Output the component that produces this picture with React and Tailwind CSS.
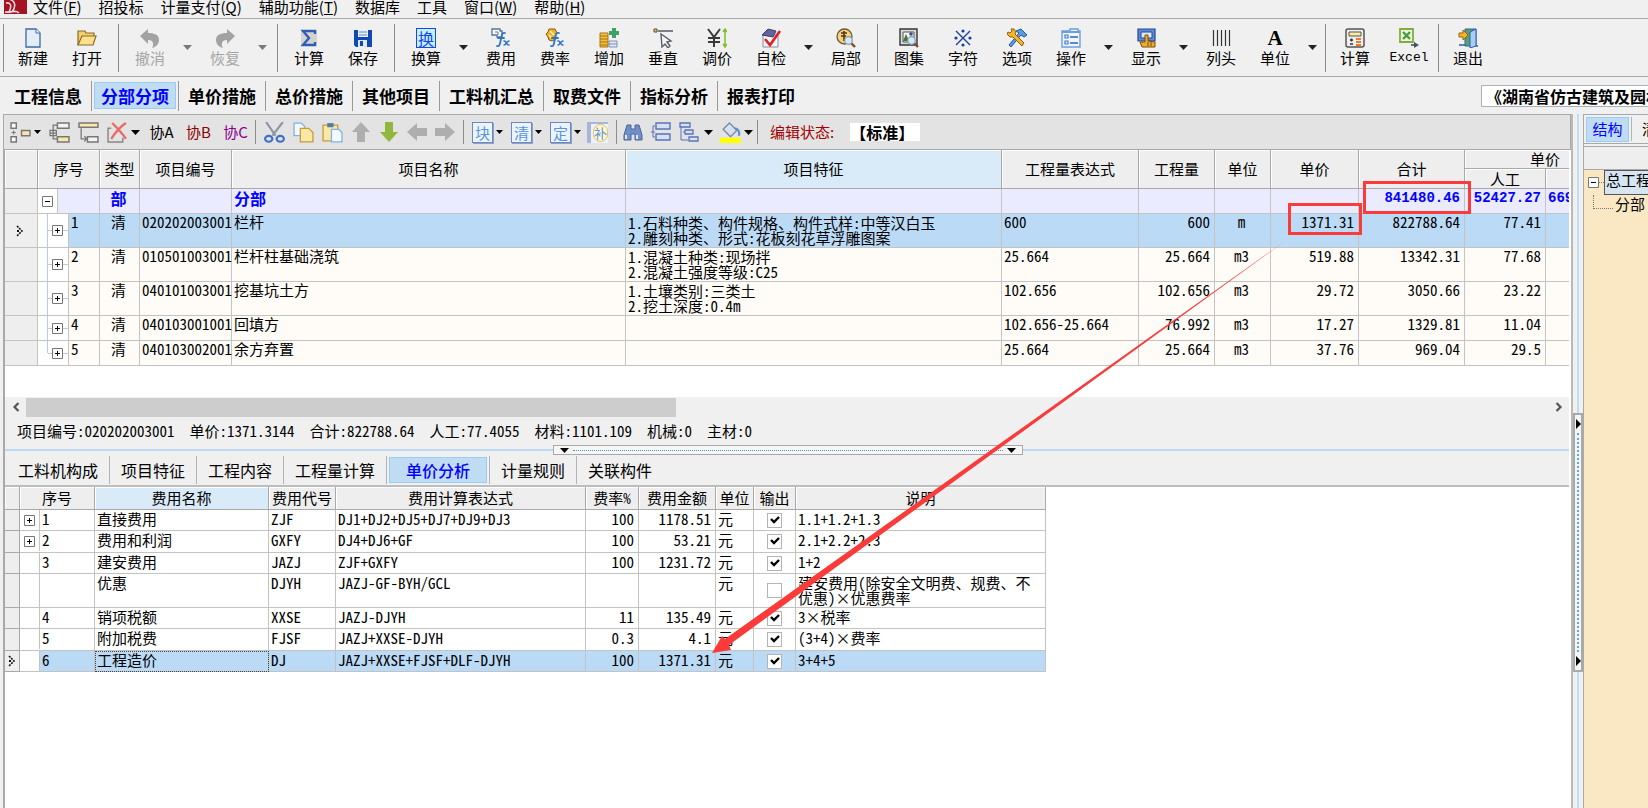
import { Fragment } from "react";
import clsx from "clsx";

const menus = [
  ["文件", "F"], ["招投标"], ["计量支付", "Q"], ["辅助功能", "T"],
  ["数据库"], ["工具"], ["窗口", "W"], ["帮助", "H"],
];

const Svg = ({ children, size = 20 }) => (
  <svg width={size} height={size} viewBox="0 0 20 20" fill="none" className="shrink-0" aria-hidden="true">
    {children}
  </svg>
);

const FxMark = () => (
  <g stroke="#2f74c4" strokeWidth="1.8" strokeLinecap="round">
    <path d="M14 5c-3-1-3 2-4 6s-1 8-4 7M7 10h6" />
    <path d="M13 13c2-1 3 5 5 4M18 13c-2 0-3 4-5 4" strokeWidth="1.5" />
  </g>
);

const Lens = () => (
  <g>
    <path d="M15 15l4 4" stroke="#7a4a2a" strokeWidth="2.4" />
    <circle cx="12.5" cy="12.5" r="3.8" fill="#cfe9f7" stroke="#8a9aa8" strokeWidth="1.2" />
  </g>
);

const icons = {
  new: (
    <Svg>
      <path d="M3 1h10l4 4v14H3z" fill="#e4eefb" stroke="#3f66ad" strokeWidth="1.3" />
      <path d="M13 1v4h4" fill="#fff" stroke="#3f66ad" />
    </Svg>
  ),
  open: (
    <Svg>
      <path d="M1 17V3h7l1 2h8v3" fill="#f5cf6a" stroke="#8a6a28" strokeWidth="1.2" />
      <path d="M1 17L5 8h14l-3 9z" fill="#fde08c" stroke="#8a6a28" strokeWidth="1.2" />
    </Svg>
  ),
  undo: <Svg><path d="M0 8l8-7v4c7 0 11 2 11 7 0 4-3 7-7 8 2-3 2-8-4-8v4z" fill="#a2a2a2" /></Svg>,
  redo: <Svg><path d="M20 8l-8-7v4C5 5 1 7 1 12c0 4 3 7 7 8-2-3-2-8 4-8v4z" fill="#a2a2a2" /></Svg>,
  sum: (
    <Svg>
      <rect x="2" y="2" width="16" height="16" fill="#d3d3d0" />
      <path d="M16 6V3H4l6 7-6 7h12v-3" stroke="#2d5fb5" strokeWidth="2.4" />
    </Svg>
  ),
  save: (
    <Svg>
      <path d="M1 2h18v17H3l-2-2z" fill="#1248b4" />
      <path d="M5 2h10v7H5z" fill="#e9f1fb" />
      <path d="M6 4h8M6 7h8" stroke="#5b8bd0" />
      <path d="M5 12h9v7H5z" fill="#dfe9f5" />
      <path d="M7 13h3v5H7z" fill="#1248b4" />
    </Svg>
  ),
  convert: (
    <span className="flex size-5 items-center justify-center border border-blue-700 bg-[#c4f0fc] text-[16px] leading-none text-blue-700">换</span>
  ),
  fee: (
    <Svg>
      <path d="M1 1h8v2h2v6H6V7H1z" fill="#fff" stroke="#56749c" strokeWidth="1.3" />
      <path d="M4 4h3v3" stroke="#56749c" />
      <FxMark />
    </Svg>
  ),
  rate: (
    <Svg>
      <path d="M4 1l6 0 2 4-2 3 1 3-4 2-3-1-1-3-2-3 2-2z" fill="#f0b02c" stroke="#8a5a10" />
      <path d="M5 3l4 4M4 7l3 3" stroke="#fff3b0" strokeWidth="1.5" />
      <FxMark />
    </Svg>
  ),
  add: (
    <Svg>
      <path d="M1 5h8v14H1z" fill="#f3c03c" stroke="#a87510" />
      <path d="M1 8h8M1 11h8M1 14h8M1 17h8" stroke="#a87510" />
      <path d="M10 13h8v6h-8z" fill="#dce8f5" stroke="#7c93b5" />
      <path d="M10 16h8" stroke="#7c93b5" />
      <path d="M13 0h4v3h3v4h-3v3h-4V7h-3V3h3z" fill="#3fa068" />
    </Svg>
  ),
  vertical: (
    <Svg>
      <path d="M1 1h3v3H1z" fill="#f3c58a" stroke="#5a4630" />
      <path d="M5 3h15" stroke="#4c4c56" strokeWidth="1.4" />
      <path d="M8 6l10 7-4 1 3 4-2 2-3-4-3 3z" fill="#f6f6f8" stroke="#5a5f68" strokeWidth="1.4" />
    </Svg>
  ),
  price: (
    <Svg>
      <path d="M1 1l6 8 6-8M7 9v10M1 10h12M1 14h12" stroke="#3a3a3a" strokeWidth="2" />
      <path d="M18 2v16M16 4l2-3 2 3M16 16l2 3 2-3" stroke="#7fbf2a" strokeWidth="1.5" />
    </Svg>
  ),
  check: (
    <Svg>
      <path d="M2 7h15v12H2z" fill="#fdf7f7" stroke="#8b8b9c" />
      <path d="M1 7l6-6 8 2-3 6z" fill="#6065a0" stroke="#3d3f6b" />
      <path d="M4 11l5 6L19 3" stroke="#d9202a" strokeWidth="2.6" />
    </Svg>
  ),
  part: (
    <Svg>
      <circle cx="8.5" cy="8.5" r="7.5" fill="#f6d27a" stroke="#6b5a3a" strokeWidth="1.3" />
      <path d="M8 3v10M5 5h6M5 8h5" stroke="#4a3a1a" strokeWidth="1.6" />
      <Lens />
    </Svg>
  ),
  atlas: (
    <Svg>
      <path d="M1 1h17v16H1z" fill="#d9dce0" stroke="#333" strokeWidth="1.4" />
      <path d="M4 4h11v10H4z" fill="#f4f6f8" stroke="#555" />
      <path d="M4 13l3-7 3 7z" fill="#3e7a34" />
      <circle cx="12" cy="6" r="1.8" fill="#3f4c80" />
      <Lens />
    </Svg>
  ),
  symbol: (
    <Svg>
      <path d="M3 3l14 14M17 3L3 17" stroke="#1c3ca8" strokeWidth="1.4" />
      <g fill="#1c3ca8">
        <circle cx="10" cy="3" r="1.6" /><circle cx="10" cy="17" r="1.6" />
        <circle cx="3" cy="10" r="1.6" /><circle cx="17" cy="10" r="1.6" />
      </g>
    </Svg>
  ),
  options: (
    <Svg>
      <path d="M9 3l5-2 6 6-3 2-3-2L4 19l-2-2L12 5z" fill="#5a9be0" stroke="#245a9c" />
      <path d="M1 4l2 1 2-2-1-2 3 0 2 3-1 2 9 9-2 3-9-9-3 0-3-3z" fill="#f3b62a" stroke="#8a5f10" />
    </Svg>
  ),
  operate: (
    <Svg>
      <path d="M1 3h8V1h8v2h2v16H1z" fill="#eff6ff" stroke="#6a9fdc" strokeWidth="1.4" />
      <path d="M1 4h18" stroke="#6a9fdc" strokeWidth="2" />
      <path d="M4 7h3v3H4zM4 13h3v3H4z" stroke="#3f78c8" strokeWidth="1.2" />
      <path d="M9 9h8M9 15h8" stroke="#2f66b8" strokeWidth="1.6" />
    </Svg>
  ),
  display: (
    <Svg>
      <path d="M2 1h17v12H2z" fill="#5b8be0" stroke="#27468c" strokeWidth="1.2" />
      <path d="M5 4h11v6H5z" fill="#dbe8fb" stroke="#27468c" />
      <path d="M4 14h5V7h3v6l7 1v5H6z" fill="#f0ae28" stroke="#7a4a10" />
      <path d="M12 14v4M15 14v4" stroke="#7a4a10" />
    </Svg>
  ),
  columns: <Svg><path d="M2.500 2v16M6.500 2v16M10.500 2v16M14.500 2v16M18.500 2v16" stroke="#333" strokeWidth="1.2" /></Svg>,
  unit: <span className="font-['Liberation_Serif',serif] text-[21px] font-bold leading-5">A</span>,
  calc: (
    <Svg>
      <rect x="1" y="1" width="18" height="18" rx="2" fill="#efefef" stroke="#555" strokeWidth="1.5" />
      <path d="M4 4h12v4H4z" fill="#ffe8a0" stroke="#555" />
      <path d="M5 12h3M5 16h3M6.500 10.500v3" stroke="#333" strokeWidth="1.4" />
      <path d="M11 11h5M11 14h5M11 17h5" stroke="#f07830" strokeWidth="1.8" />
    </Svg>
  ),
  excel: (
    <Svg>
      <path d="M1 1h13v13H1z" fill="#eef6e0" stroke="#7fae3c" strokeWidth="1.8" />
      <path d="M4 4l7 7M11 4l-7 7" stroke="#4c9a3c" strokeWidth="2.4" />
      <path d="M12 17h4" stroke="#44545c" strokeWidth="1.6" />
      <path d="M15 14l5 3-5 3z" fill="#44545c" />
    </Svg>
  ),
  exit: (
    <Svg>
      <path d="M7 1h11v17H7z" fill="#5aa070" stroke="#2f5fa8" />
      <path d="M12 4l6-3v17l-6 2z" fill="#a9cdf5" stroke="#2f5fa8" />
      <path d="M1 17h6M18 18h2" stroke="#2f5fa8" strokeWidth="1.6" />
      <path d="M1 5h4V2l5 5-5 5V9H1z" fill="#f7b32c" stroke="#9a6410" />
    </Svg>
  ),
};

const toolbar = [
  [["新建", "new"], ["打开", "open"]],
  [["撤消", "undo", true, true], ["恢复", "redo", true, true]],
  [["计算", "sum"], ["保存", "save"]],
  [
    ["换算", "convert", true], ["费用", "fee"], ["费率", "rate"], ["增加", "add"],
    ["垂直", "vertical"], ["调价", "price"], ["自检", "check", true], ["局部", "part"],
  ],
  [
    ["图集", "atlas"], ["字符", "symbol"], ["选项", "options"], ["操作", "operate", true],
    ["显示", "display", true], ["列头", "columns"], ["单位", "unit", true],
  ],
  [["计算", "calc"], ["Excel", "excel"]],
  [["退出", "exit"]],
];

const Caret = ({ className = "text-black" }) => (
  <svg width="9" height="5" viewBox="0 0 9 5" className={className} aria-hidden="true">
    <path d="M0 0h9L4.500 5z" fill="currentColor" />
  </svg>
);

const pageTabs = ["工程信息", "分部分项", "单价措施", "总价措施", "其他项目", "工料机汇总", "取费文件", "指标分析", "报表打印"];
const detailTabs = ["工料机构成", "项目特征", "工程内容", "工程量计算", "单价分析", "计量规则", "关联构件"];

const Arrow = ({ turn, color }) => (
  <Svg><path d="M10 0l9 10h-5v10H6V10H1z" fill={color} className={turn} style={{ transformOrigin: "center" }} /></Svg>
);

const Boxed = ({ char }) => (
  <span className="flex size-[21px] items-center justify-center border border-[#6f86c0] bg-[#eaf4fd] text-[15px] leading-none text-[#5b95d6] shadow-[1px_1px_0_#8f9fcf]">
    {char}
  </span>
);

// caret is the width of the drop-down strip, sep the margin before a trailing divider
const editTools = [
  { label: "插入", gap: "ml-1.5", caret: "w-3", icon: (
    <Svg size={21}>
      <path d="M1 1h5v5H1zM1 14h5v5H1z" fill="#fff" stroke="#777" strokeWidth="1.4" />
      <path d="M3.500 8v4M1.500 10h4" stroke="#777" />
      <path d="M11 8h8v5h-8z" fill="#fde7a8" stroke="#777" strokeWidth="1.4" />
    </Svg>
  ) },
  { label: "插入子项", gap: "ml-1.5", icon: (
    <Svg size={21}>
      <path d="M8 1h11v5H8z" fill="#f4f4f4" stroke="#777" strokeWidth="1.4" />
      <path d="M8 14h11v5H8z" fill="#fde7a8" stroke="#777" strokeWidth="1.4" />
      <path d="M8 3H4v5M4 13v3h4M1 8h6v5H1zM4 8v5M1 10.500h6" stroke="#777" strokeWidth="1.2" />
    </Svg>
  ) },
  { label: "追加", gap: "ml-2", icon: (
    <Svg size={21}>
      <path d="M1 1h18v4H1z" fill="#fde7a8" stroke="#777" strokeWidth="1.4" />
      <path d="M9 14h10v5H9z" fill="#f4f4f4" stroke="#777" strokeWidth="1.4" />
      <path d="M3 6v10h5M6 13.500L8.500 16 6 18.500" stroke="#777" strokeWidth="1.2" />
    </Svg>
  ) },
  { label: "删除", gap: "ml-2", caret: "w-[15px]", icon: (
    <Svg size={21}>
      <path d="M4 6H1v13h14v-4" stroke="#888" strokeWidth="1.4" />
      <path d="M5 1c4 4 9 9 13 15M18 1C12 5 8 10 4 16" stroke="#ea6a62" strokeWidth="2.2" />
    </Svg>
  ) },
  { label: "协A", text: "text-black" },
  { label: "协B", text: "text-[#8b0000]" },
  { label: "协C", text: "text-[#8b008b]", sep: "ml-px" },
  { label: "剪切", gap: "ml-2", icon: (
    <Svg size={21}>
      <path d="M2 0l9 13M18 0L8 13" stroke="#8a96a6" strokeWidth="2" />
      <ellipse cx="4.500" cy="16" rx="3.500" ry="2.800" stroke="#3f6fc4" strokeWidth="2" />
      <ellipse cx="15.500" cy="16" rx="3.500" ry="2.800" stroke="#3f6fc4" strokeWidth="2" />
    </Svg>
  ) },
  { label: "复制", gap: "ml-2", icon: (
    <Svg size={21}>
      <path d="M1 1h7l3 3v9H1z" fill="#f2f8ff" stroke="#7fb0e8" strokeWidth="1.2" />
      <path d="M7 6h8l4 4v9H7z" fill="#fbe8a4" stroke="#c79a3c" strokeWidth="1.2" />
    </Svg>
  ) },
  { label: "粘贴", gap: "ml-2", icon: (
    <Svg size={21}>
      <path d="M1 3h14v15H1z" fill="#fbe8a4" stroke="#c79a3c" strokeWidth="1.2" />
      <path d="M5 1h6v4H5z" fill="#4f7fa8" />
      <path d="M9 7h7l3 3v9H9z" fill="#f2f8ff" stroke="#7fb0e8" strokeWidth="1.2" />
    </Svg>
  ) },
  { label: "上移", gap: "ml-2", icon: <Arrow color="#aeaeae" /> },
  { label: "下移", gap: "ml-2", icon: <Arrow color="#8fb83c" turn="rotate-180" /> },
  { label: "左移", gap: "ml-2", icon: <Arrow color="#aeaeae" turn="-rotate-90" /> },
  { label: "右移", gap: "ml-2", icon: <Arrow color="#aeaeae" turn="rotate-90" />, sep: "ml-2" },
  { label: "块", gap: "ml-2", icon: <Boxed char="块" />, caret: "w-3" },
  { label: "清", gap: "ml-1.5", icon: <Boxed char="清" />, caret: "w-3" },
  { label: "定", gap: "ml-1.5", icon: <Boxed char="定" />, caret: "w-3" },
  { label: "补", gap: "ml-1", sep: "ml-2", icon: (
    <span className="flex h-[21px] w-[21px] items-center justify-end border-l-4 border-t-2 border-[#a8b4dc] bg-[#eaf4fd]">
      <span className="rounded-full border border-[#e8c050] bg-[#fff8d8] text-[13px] leading-4 text-[#5b95d6]">补</span>
    </span>
  ) },
  { label: "查找", gap: "ml-1.5", icon: (
    <Svg size={20}>
      <path d="M4 3h4v4h4V3h4l3 10v5h-7v-6H8v6H1v-5z" fill="#6f8fc8" stroke="#4a6499" />
      <path d="M3 13v4M14 13v4" stroke="#dfeaff" strokeWidth="2" />
    </Svg>
  ) },
  { label: "展开", gap: "ml-2", icon: (
    <Svg size={20}>
      <path d="M5 1h14v6H5zM5 12h14v6H5z" fill="#d5e0f7" stroke="#5b73b4" strokeWidth="1.4" />
      <path d="M0 10h4M4 4H2v11h2" stroke="#5b73b4" />
    </Svg>
  ) },
  { label: "层次", gap: "ml-2", caret: "w-[19px]", icon: (
    <Svg size={20}>
      <path d="M1 1h10v4H1zM6 8h8v4H6zM10 15h9v4h-9z" fill="#d5e0f7" stroke="#5b73b4" strokeWidth="1.3" />
      <path d="M2 5v13h7M4 10h2" stroke="#5b73b4" />
    </Svg>
  ) },
  { label: "填充", gap: "ml-0.5", caret: "w-[15px]", sep: "ml-px", icon: (
    <Svg size={21}>
      <path d="M3 7l6-6 7 7-6 6z" fill="#d8e2ee" stroke="#7a8ca4" strokeWidth="1.3" />
      <path d="M14 6c3 0 5 3 4 7" stroke="#5c8fd6" strokeWidth="2" />
      <path d="M0 15h20v5H0z" fill="#ff0" />
    </Svg>
  ) },
];

const feature = {
  1: ["1.石料种类、构件规格、构件式样:中等汉白玉", "2.雕刻种类、形式:花板刻花草浮雕图案"],
  2: ["1.混凝土种类:现场拌", "2.混凝土强度等级:C25"],
  3: ["1.土壤类别:三类土", "2.挖土深度:0.4m"],
};

const items = [
  { no: 1, code: "020202003001", name: "栏杆", expr: "600", qty: "600", unit: "m", price: "1371.31", total: "822788.64", labor: "77.41" },
  { no: 2, code: "010501003001", name: "栏杆柱基础浇筑", expr: "25.664", qty: "25.664", unit: "m3", price: "519.88", total: "13342.31", labor: "77.68" },
  { no: 3, code: "040101003001", name: "挖基坑土方", expr: "102.656", qty: "102.656", unit: "m3", price: "29.72", total: "3050.66", labor: "23.22" },
  { no: 4, code: "040103001001", name: "回填方", expr: "102.656-25.664", qty: "76.992", unit: "m3", price: "17.27", total: "1329.81", labor: "11.04" },
  { no: 5, code: "040103002001", name: "余方弃置", expr: "25.664", qty: "25.664", unit: "m3", price: "37.76", total: "969.04", labor: "29.5" },
];

const fees = [
  { no: "1", tree: true, name: "直接费用", code: "ZJF", expr: "DJ1+DJ2+DJ5+DJ7+DJ9+DJ3", rate: "100", sum: "1178.51", out: true, note: ["1.1+1.2+1.3"] },
  { no: "2", tree: true, name: "费用和利润", code: "GXFY", expr: "DJ4+DJ6+GF", rate: "100", sum: "53.21", out: true, note: ["2.1+2.2+2.3"] },
  { no: "3", name: "建安费用", code: "JAZJ", expr: "ZJF+GXFY", rate: "100", sum: "1231.72", out: true, note: ["1+2"] },
  { no: "", name: "优惠", code: "DJYH", expr: "JAZJ-GF-BYH/GCL", rate: "", sum: "", out: false, note: ["建安费用(除安全文明费、规费、不", "优惠)×优惠费率"] },
  { no: "4", name: "销项税额", code: "XXSE", expr: "JAZJ-DJYH", rate: "11", sum: "135.49", out: true, note: ["3×税率"] },
  { no: "5", name: "附加税费", code: "FJSF", expr: "JAZJ+XXSE-DJYH", rate: "0.3", sum: "4.1", out: true, note: ["(3+4)×费率"] },
  { no: "6", name: "工程造价", code: "DJ", expr: "JAZJ+XXSE+FJSF+DLF-DJYH", rate: "100", sum: "1371.31", out: true, note: ["3+4+5"], active: true },
];

const TreeBox = ({ open }) => (
  <svg width="11" height="11" viewBox="0 0 11 11" className="shrink-0" aria-hidden="true">
    <path d="M.5 .5h10v10H.5z" fill="#fff" stroke="#777" />
    <path d={open ? "M3 5.500h5" : "M3 5.500h5M5.500 3v5"} stroke="#000" />
  </svg>
);

const RowMark = () => (
  <svg width="8" height="12" viewBox="0 0 8 12" className="mx-auto" aria-hidden="true">
    <path d="M1 1l5 5-5 5" fill="none" stroke="#111" strokeWidth="1.6" strokeDasharray="2 1" />
    <path d="M1 5h2v2H1z" fill="#111" />
  </svg>
);

const MenuBar = () => (
  <nav className="flex h-[19px] items-end gap-[17px] border-b border-[#a9a9a9] pb-1 pl-1 text-[15px] leading-[15px]">
    <svg width="24" height="15" viewBox="0 0 24 15" className="-mr-3 shrink-0" aria-hidden="true">
      <path d="M0 0h23v15H0z" fill="#a51224" />
      <path d="M2 4c5-1 6 3 3 9M5 0c7 2 7 8 3 13M1 13c7 1 10-3 14 1" fill="none" stroke="#f3d8da" strokeWidth="1.6" />
    </svg>
    {menus.map(([name, key]) => (
      <button key={name} className="whitespace-nowrap">
        {name}
        {key && <>(<u>{key}</u>)</>}
      </button>
    ))}
  </nav>
);

const MainToolbar = () => (
  <div className="flex h-[58px] items-center border-b border-[#a9a9a9] pl-[3px]">
    <span className="mr-0.5 h-12 w-px shrink-0 bg-[#8c8c8c]" />
    {toolbar.map((group, i) => (
      <Fragment key={i}>
        {i > 0 && <span className={clsx("h-12 w-px shrink-0 bg-[#8c8c8c]", i > 4 ? "mx-0.5" : "mx-1")} />}
        {group.map(([label, icon, caret, disabled]) => (
          <Fragment key={label}>
            <button disabled={disabled} className="flex w-[54px] shrink-0 flex-col items-center gap-px text-[15px] leading-[18px] text-black disabled:text-[#a6a6a6]">
              {icons[icon]}
              <span className={clsx(label === "Excel" && "font-['Liberation_Mono',monospace] text-[13px]")}>{label}</span>
            </button>
            {caret && (
              <button aria-label={`${label}选项`} className="flex w-[21px] shrink-0 justify-center">
                <Caret className={disabled ? "text-[#7a7a7a]" : "text-[#222]"} />
              </button>
            )}
          </Fragment>
        ))}
      </Fragment>
    ))}
  </div>
);

const PageTabs = () => (
  <div className="flex h-[37px] items-center pl-[5px]">
    {pageTabs.map((tab, i) => (
      <Fragment key={tab}>
        <button
          className={clsx(
            "mx-0.5 h-[27px] shrink-0 whitespace-nowrap border px-1.5 text-[17px] font-bold leading-6",
            tab === "分部分项" ? "border-[#99cdf5] bg-[#c0dcf3] text-[#0000ff]" : "border-transparent"
          )}
        >
          {tab}
        </button>
        {i < pageTabs.length - 1 && <span className="h-[30px] w-px shrink-0 bg-[#999]" />}
      </Fragment>
    ))}
    <select aria-label="定额库" className="ml-auto h-[22px] w-[167px] shrink-0 appearance-none overflow-hidden border border-r-0 border-[#aab0b8] bg-white pl-1 text-[16px] font-bold leading-5">
      <option>《湖南省仿古建筑及园林</option>
    </select>
  </div>
);

const EditToolbar = () => (
  <div className="flex h-9 items-center border border-[#a9a9a9] bg-[#e3e3e3]">
    {editTools.map((tool) => (
      <Fragment key={tool.label}>
        {tool.text ? (
          <button className={clsx("w-[37px] shrink-0 whitespace-nowrap text-center text-[15px]", tool.text)}>{tool.label}</button>
        ) : (
          <button aria-label={tool.label} className={clsx("flex shrink-0 items-center", tool.gap)}>
            {tool.icon}
            {tool.caret && (
              <span className={clsx("flex justify-center", tool.caret)}>
                {tool.caret === "w-3" ? <svg width="7" height="4" viewBox="0 0 7 4" aria-hidden="true"><path d="M0 0h7L3.500 4z" /></svg> : <Caret />}
              </span>
            )}
          </button>
        )}
        {tool.sep && <span className={clsx("h-6 w-px shrink-0 bg-[#8c8c8c]", tool.sep)} />}
      </Fragment>
    ))}
    <label htmlFor="edit-state" className="ml-3 whitespace-nowrap text-[15px] text-[#a00000]">编辑状态:</label>
    <input id="edit-state" readOnly defaultValue="【标准】" className="ml-4 h-[18px] w-[70px] bg-white text-[16px] font-bold leading-4" />
  </div>
);

const head = "border-b border-r border-[#a9a9a9] p-0 text-center font-normal whitespace-nowrap shadow-[inset_1px_1px_0_#fff]";
const cell = "border-b border-r border-[#c3c3c3] py-0 pl-0.5 pr-1 whitespace-nowrap";
const boldNumber = "font-['Liberation_Mono',monospace] text-[14px]";

const ItemTable = () => (
  <div className="overflow-hidden">
    <table className="w-[1621px] table-fixed border-separate border-spacing-0 text-[15px] leading-[18px] [font-feature-settings:'hwid']">
      <colgroup>
        {[33, 62, 40, 92, 394, 376, 137, 76, 56, 88, 106, 81, 80].map((w, i) => <col key={i} style={{ width: w }} />)}
      </colgroup>
      <thead className="bg-[#eee]">
        <tr className="h-[19px]">
          <th rowSpan={2} className={head} />
          {["序号", "类型", "项目编号", "项目名称", "项目特征", "工程量表达式", "工程量", "单位", "单价", "合计"].map((h) => (
            <th key={h} rowSpan={2} className={clsx(head, h === "项目特征" && "bg-[#d9eaf8]")}>{h}</th>
          ))}
          <th colSpan={2} className={head}>单价</th>
        </tr>
        <tr className="h-5">
          <th className={head}>人工</th>
          <th className={head}>材料</th>
        </tr>
      </thead>
      <tbody className="align-top leading-4">
        <tr className="h-[25px] bg-[#ebebff] font-bold leading-[18px] text-[#0000ff]">
          <td className={clsx(cell, "bg-[#eee]")} />
          <td className="border-b border-r border-[#c3c3c3] p-0">
            <div className="flex h-6 w-5 items-center border-r border-[#c3c3c3] bg-white pl-1"><TreeBox open /></div>
          </td>
          <td className={clsx(cell, "text-center text-[16px]")}>部</td>
          <td className={cell} />
          <td className={clsx(cell, "text-[16px]")}>分部</td>
          <td className={cell} />
          <td className={cell} />
          <td className={cell} />
          <td className={cell} />
          <td className={cell} />
          <td className={clsx(cell, boldNumber, "text-right")}>841480.46</td>
          <td className={clsx(cell, boldNumber, "text-right")}>52427.27</td>
          <td className={clsx(cell, boldNumber)}>669</td>
        </tr>
        {items.map((row) => (
          <tr key={row.no} className={clsx(feature[row.no] ? "h-[34px]" : "h-[25px]", row.no === 1 ? "bg-[#bbdaf6]" : "bg-[#fffcf7]")}>
            <td className={clsx(cell, "bg-[#eee] align-middle")}>{row.no === 1 && <RowMark />}</td>
            <td className="border-b border-r border-[#c3c3c3] p-0">
              <div className={clsx("flex", feature[row.no] ? "h-[33px]" : "h-6")}>
                <div className="flex w-[30px] shrink-0 bg-white">
                  <div className="w-[9px] shrink-0" />
                  <div className={clsx("border-l border-[#b5cde6]", row.no === 5 && "h-1/2")} />
                  <div className="flex grow items-center">
                    <span className="h-px w-1 bg-[#b5cde6]" />
                    <TreeBox />
                    <span className="h-px grow bg-[#b5cde6]" />
                  </div>
                </div>
                <span className="border-l border-[#c3c3c3] pl-0.5">{row.no}</span>
              </div>
            </td>
            <td className={clsx(cell, "text-center")}>清</td>
            <td className={cell}>{row.code}</td>
            <td className={cell}>{row.name}</td>
            <td className={clsx(cell, "leading-[15px]")}>{feature[row.no]?.map((line, i) => <div key={line} className={clsx(i === 0 && "pt-px")}>{line}</div>)}</td>
            <td className={cell}>{row.expr}</td>
            <td className={clsx(cell, "text-right")}>{row.qty}</td>
            <td className={clsx(cell, "text-center")}>{row.unit}</td>
            <td className={clsx(cell, "text-right")}>{row.price}</td>
            <td className={clsx(cell, "text-right")}>{row.total}</td>
            <td className={clsx(cell, "text-right")}>{row.labor}</td>
            <td className={cell} />
          </tr>
        ))}
      </tbody>
    </table>
  </div>
);

const FeeTable = () => (
  <table className="w-[1041px] table-fixed border-separate border-spacing-0 text-[15px] leading-[18px] [font-feature-settings:'hwid']">
    <colgroup>
      {[15, 75, 174, 67, 250, 53, 77, 38, 42, 250].map((w, i) => <col key={i} style={{ width: w }} />)}
    </colgroup>
    <thead className="bg-[#eee]">
      <tr className="h-[23px]">
        <th className={head} />
        {["序号", "费用名称", "费用代号", "费用计算表达式", "费率%", "费用金额", "单位", "输出", "说明"].map((h) => (
          <th key={h} className={clsx(head, h === "费用名称" && "bg-[#d9eaf8]")}>{h}</th>
        ))}
      </tr>
    </thead>
    <tbody className="align-top">
      {fees.map((row) => {
        const tall = row.note.length > 1;
        return (
          <tr key={row.code} className={clsx(tall ? "h-[34px]" : row.no === "2" || row.no === "5" ? "h-[22px]" : "h-[21px]", row.active ? "bg-[#bbdaf6]" : "bg-white")}>
            <td className="border-b border-r border-[#a9a9a9] bg-[#eee] p-0 align-middle">{row.active && <RowMark />}</td>
            <td className="border-b border-r border-[#c3c3c3] p-0">
              <div className={clsx("flex", tall ? "h-[33px]" : "h-5")}>
                <div className="flex w-5 shrink-0 items-center border-r border-[#c3c3c3] bg-white pl-1">{row.tree && <TreeBox />}</div>
                <span className="pl-0.5">{row.no}</span>
              </div>
            </td>
            <td className={clsx(cell, row.active && "outline-1 -outline-offset-1 outline-dotted outline-[#444]")}>{row.name}</td>
            <td className={cell}>{row.code}</td>
            <td className={cell}>{row.expr}</td>
            <td className={clsx(cell, "text-right")}>{row.rate}</td>
            <td className={clsx(cell, "text-right")}>{row.sum}</td>
            <td className={cell}>元</td>
            <td className="border-b border-r border-[#c3c3c3] p-0 align-middle">
              <div className="mx-auto grid size-[15px]">
                <input type="checkbox" aria-label={`输出${row.name}`} defaultChecked={row.out} className="peer col-start-1 row-start-1 size-[15px] appearance-none border border-[#b4b4b4] bg-white" />
                <svg viewBox="0 0 15 15" className="pointer-events-none col-start-1 row-start-1 hidden size-[15px] peer-checked:block" aria-hidden="true">
                  <path d="M4 6l3 3 5-5" fill="none" stroke="#000" strokeWidth="2.4" />
                </svg>
              </div>
            </td>
            <td className={clsx(cell, tall && "leading-[15px]")}>{row.note.map((line, i) => <div key={line} className={clsx(tall && i === 0 && "pt-px")}>{line}</div>)}</td>
          </tr>
        );
      })}
    </tbody>
  </table>
);

const StatusLine = () => (
  <div className="relative flex h-[34px] items-center gap-[15px] border-b-2 border-[#bcd8f2] px-3 pb-1 text-[15px] [font-feature-settings:'hwid']">
    {["项目编号:020202003001", "单价:1371.3144", "合计:822788.64", "人工:77.4055", "材料:1101.109", "机械:0", "主材:0"].map((s) => (
      <span key={s} className="whitespace-nowrap">{s}</span>
    ))}
    {/* splitter grip */}
    <div className="absolute -bottom-1.5 left-[548px] flex h-2.5 w-[470px] items-center border border-[#a9a9a9] bg-[#f6f6f6] px-1.5">
      <Caret />
      <span className="mx-1 grow border-b border-dotted border-[#3f97dc]" />
      <Caret />
    </div>
  </div>
);

const DetailTabs = () => (
  <div className="flex h-9 items-center border-b-2 border-[#bdbdbd] pl-0.5 pt-1">
    {detailTabs.map((tab, i) => {
      const active = tab === "单价分析";
      return (
        <div key={tab} className={clsx("flex h-7 shrink-0 items-center px-0.5", i < detailTabs.length - 1 && "border-r border-[#b4b4b4]")}>
          <button className={clsx("h-[26px] border text-[16px] leading-6", active ? "border-[#99cdf5] bg-[#c0dcf3] px-4 font-medium text-[#0000ff]" : "border-transparent px-2")}>
            {tab}
          </button>
        </div>
      );
    })}
  </div>
);

const StructurePanel = () => (
  <aside className="flex w-[65px] shrink-0 flex-col overflow-hidden border-l border-[#a9a9a9] text-[15px]">
    <div className="flex h-[30px] shrink-0 items-center border-b border-t border-[#a9a9a9] pl-0.5">
      <button className="h-[25px] w-[43px] shrink-0 border border-[#99cdf5] bg-[#c0dcf3] leading-5 text-[#0000ff]">结构</button>
      <span className="ml-0.5 h-6 w-px shrink-0 bg-[#b4b4b4]" />
      <button className="shrink-0 pl-2.5">清单</button>
    </div>
    <div className="mt-0.5 h-[24px] shrink-0 border-y border-[#a9a9a9] bg-[#eee]" />
    <div className="flex grow flex-col bg-[#fae7c4] leading-[18px]">
      <div className="flex items-center pl-1">
        <TreeBox open />
        <span className="w-[5px] shrink-0 border-b border-dotted border-[#777]" />
        <span className="h-[25px] w-16 shrink-0 whitespace-nowrap border border-[#555] bg-[#d7e5f2] pl-px">总工程</span>
      </div>
      <div className="flex pl-[9px]">
        <span className="mr-0.5 h-3.5 w-5 shrink-0 border-b border-l border-dotted border-[#777]" />
        <span className="whitespace-nowrap">分部</span>
      </div>
    </div>
  </aside>
);

// Red callouts linking the item price to its fee breakdown
const Callouts = () => (
  <div className="pointer-events-none absolute inset-0 overflow-hidden">
    <div className="absolute left-[1288px] top-[203px] h-8 w-[74px] border-3 border-[#fb3a3a]" />
    <div className="absolute left-[1363px] top-[181px] h-[33px] w-[108px] border-3 border-[#fb3a3a]" />
    <svg width="1300" height="670" viewBox="0 0 1300 670" className="absolute left-0 top-0" aria-hidden="true">
      <path d="M1292 236L725 639 722 636 712 653 731 650 729 645z" fill="#fb3a3a" />
    </svg>
  </div>
);

export default function App() {
  return (
    <div className="relative flex min-h-screen flex-col overflow-hidden bg-[#f0f0f0] font-['Noto_Sans_CJK_SC',sans-serif] text-black">
      <MenuBar />
      <MainToolbar />
      <PageTabs />
      <div className="flex grow">
        <main className="ml-[3px] flex min-w-0 grow flex-col border-r-2 border-[#b9b9b9]">
          <EditToolbar />
          <div className="flex grow flex-col border-l-2 border-[#a9a9a9] bg-white pr-0.5">
            <ItemTable />
            <div className="mt-[31px] flex h-5 items-center bg-[#f0f0f0] text-[#555]">
              <button aria-label="向左滚动" className="flex w-[21px] shrink-0 justify-center">
                <svg width="8" height="10" viewBox="0 0 8 10" aria-hidden="true"><path d="M6.500 1l-4 4 4 4" fill="none" stroke="currentColor" strokeWidth="2.2" /></svg>
              </button>
              <div className="h-[19px] w-[650px] bg-[#cdcdcd]" />
              <button aria-label="向右滚动" className="ml-auto flex w-[21px] shrink-0 justify-center">
                <svg width="8" height="10" viewBox="0 0 8 10" aria-hidden="true"><path d="M1.500 1l4 4-4 4" fill="none" stroke="currentColor" strokeWidth="2.2" /></svg>
              </button>
            </div>
            <div className="bg-[#f0f0f0]">
              <StatusLine />
              <DetailTabs />
            </div>
            <FeeTable />
          </div>
        </main>
        <div className="relative flex w-[10px] shrink-0 justify-center">
          <span className="w-0.5 bg-[#c2dcf4]" />
          <div className="absolute inset-x-0 top-[299px] flex h-[259px] flex-col items-center border-2 border-[#a9a9a9] bg-[#f6f6f6] py-1">
            <svg width="5" height="10" viewBox="0 0 5 10" aria-hidden="true"><path d="M0 0l5 5-5 5z" /></svg>
            <span className="my-1 grow border-l-2 border-dotted border-[#5ba6e4]" />
            <svg width="5" height="10" viewBox="0 0 5 10" aria-hidden="true"><path d="M0 0l5 5-5 5z" /></svg>
          </div>
        </div>
        <StructurePanel />
      </div>
      <Callouts />
    </div>
  );
}
